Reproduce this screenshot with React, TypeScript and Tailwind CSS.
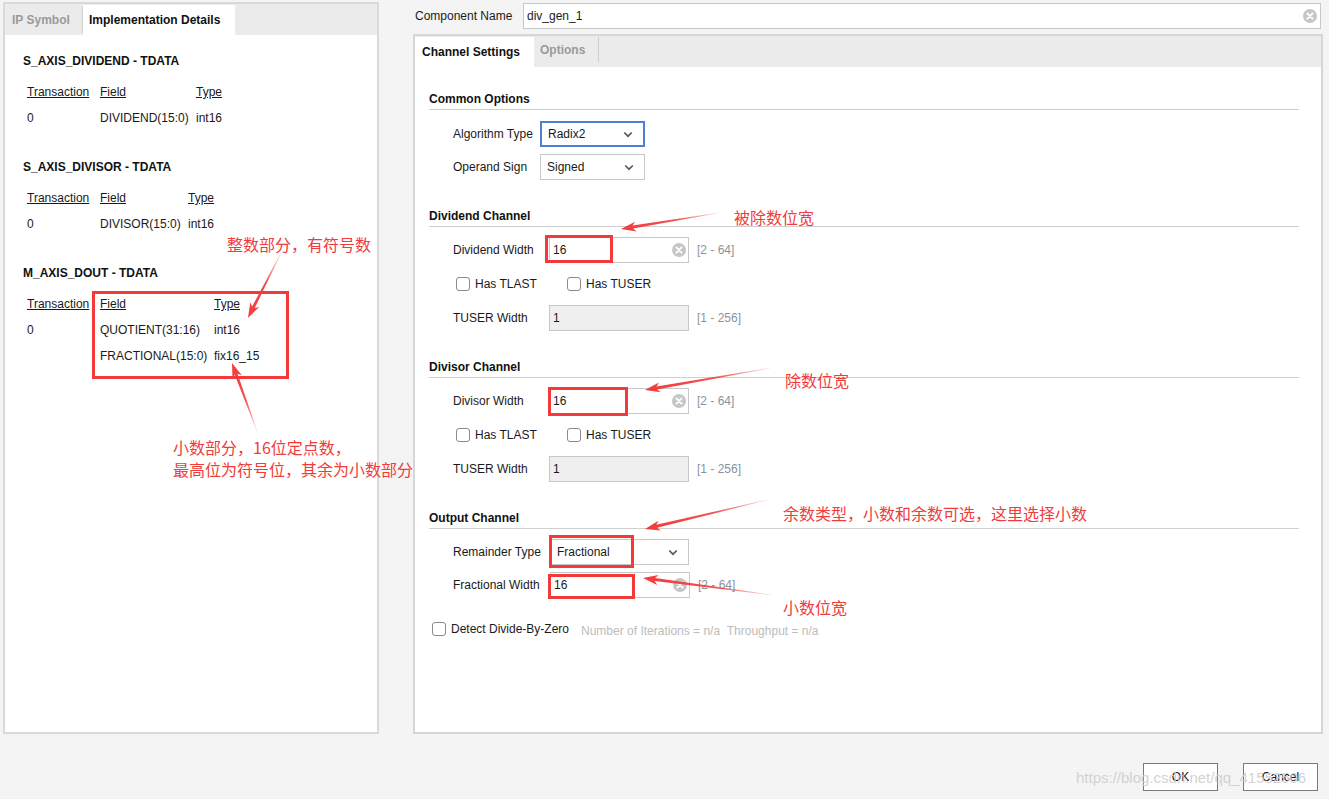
import React from "react";

const RED = "#f23b3b";

type ArrowProps = { id: string; x1: number; y1: number; x2: number; y2: number };

function Arrow({ id, x1, y1, x2, y2 }: ArrowProps) {
  const dx = x2 - x1;
  const dy = y2 - y1;
  const L = Math.hypot(dx, dy);
  const ux = dx / L;
  const uy = dy / L;
  const nx = -uy;
  const ny = ux;
  const hl = 15;
  const hw = 5;
  const sw0 = 0.3;
  const sw1 = 1.5;
  const bx = x2 - ux * hl;
  const by = y2 - uy * hl;
  const nbx = bx + ux * 3;
  const nby = by + uy * 3;
  const pts: [number, number][] = [
    [x1 + nx * sw0, y1 + ny * sw0],
    [nbx + nx * sw1, nby + ny * sw1],
    [bx + nx * hw, by + ny * hw],
    [x2, y2],
    [bx - nx * hw, by - ny * hw],
    [nbx - nx * sw1, nby - ny * sw1],
    [x1 - nx * sw0, y1 - ny * sw0],
  ];
  return (
    <g>
      <defs>
        <linearGradient id={id} gradientUnits="userSpaceOnUse" x1={x1} y1={y1} x2={x2} y2={y2}>
          <stop offset="0" stopColor={RED} stopOpacity="0.15" />
          <stop offset="0.45" stopColor={RED} stopOpacity="0.9" />
          <stop offset="1" stopColor={RED} stopOpacity="1" />
        </linearGradient>
      </defs>
      <polygon points={pts.map((p) => p.join(",")).join(" ")} fill={`url(#${id})`} />
    </g>
  );
}

function ClearIcon() {
  return (
    <svg width="14" height="14" viewBox="0 0 14 14">
      <circle cx="7" cy="7" r="7" fill="#c6c6c6" />
      <path d="M4.4 4.4 L9.6 9.6 M9.6 4.4 L4.4 9.6" stroke="#ffffff" strokeWidth="1.9" strokeLinecap="round" />
    </svg>
  );
}

function Chevron() {
  return (
    <svg width="10" height="7" viewBox="0 0 10 7">
      <path d="M1.2 1.5 L5 5.2 L8.8 1.5" stroke="#5a5a5a" strokeWidth="1.7" fill="none" />
    </svg>
  );
}

function Checkbox() {
  return <div className="w-[14px] h-[14px] rounded-[3px] border border-[#8a8a8a] bg-white shrink-0" />;
}

function SectionHeading({ title, mt }: { title: string; mt: string }) {
  return (
    <div className={`${mt} pb-[2px] border-b border-[#cfcfcf] font-bold leading-[16px] text-[#111]`}>{title}</div>
  );
}

function TextInput({ value, disabled, w }: { value: string; disabled?: boolean; w: string }) {
  return (
    <div
      className={`${w} h-[26px] border border-[#c8c8c8] flex items-center pl-[3px] pr-[2px] ${
        disabled ? "bg-[#efefef]" : "bg-white"
      }`}
    >
      <span className="flex-1">{value}</span>
      {!disabled && <ClearIcon />}
    </div>
  );
}

function Range({ text }: { text: string }) {
  return <span className="ml-[8px] text-[#8c939c]">{text}</span>;
}

function Row({ children, mt }: { children: React.ReactNode; mt: string }) {
  return <div className={`${mt} h-[26px] flex items-center`}>{children}</div>;
}

function Label({ text, w }: { text: string; w: string }) {
  return <div className={`${w} pl-[24px] shrink-0 whitespace-nowrap`}>{text}</div>;
}

function Select({ value, w, active }: { value: string; w: string; active?: boolean }) {
  return (
    <div
      className={`${w} h-[26px] bg-white flex items-center justify-between pl-[6px] pr-[10px] ${
        active ? "border-2 border-[#4d7fd6]" : "border border-[#c8c8c8]"
      }`}
    >
      <span>{value}</span>
      <Chevron />
    </div>
  );
}

function ChannelRows({ label }: { label: string }) {
  return (
    <>
      <Row mt="mt-[10px]">
        <Label text={label} w="w-[120px]" />
        <TextInput value="16" w="w-[140px]" />
        <Range text="[2 - 64]" />
      </Row>
      <Row mt="mt-[8px]">
        <div className="pl-[27px] flex items-center w-[138px] shrink-0">
          <Checkbox />
          <span className="ml-[5px]">Has TLAST</span>
        </div>
        <Checkbox />
        <span className="ml-[5px]">Has TUSER</span>
      </Row>
      <Row mt="mt-[8px]">
        <Label text="TUSER Width" w="w-[120px]" />
        <TextInput value="1" w="w-[140px]" disabled />
        <Range text="[1 - 256]" />
      </Row>
    </>
  );
}

function TableRow({ cells, w2, header }: { cells: string[]; w2: string; header?: boolean }) {
  return (
    <div className="h-[26px] flex items-center">
      <div className={`w-[73px] ${header ? "underline" : ""}`}>{cells[0]}</div>
      <div className={`${w2} ${header ? "underline" : ""}`}>{cells[1]}</div>
      <div className={header ? "underline" : ""}>{cells[2]}</div>
    </div>
  );
}

function DataBlock({
  title,
  mt,
  w2,
  rows,
}: {
  title: string;
  mt: string;
  w2: string;
  rows: string[][];
}) {
  return (
    <div className={mt}>
      <div className="font-bold leading-[16px] text-[#111]">{title}</div>
      <div className="pl-[4px] mt-[10px]">
        <TableRow cells={["Transaction", "Field", "Type"]} w2={w2} header />
        {rows.map((r, i) => (
          <TableRow key={i} cells={r} w2={w2} />
        ))}
      </div>
    </div>
  );
}

export default function App() {
  return (
    <div className="relative w-[1329px] h-[799px] overflow-hidden bg-[#f4f4f4] text-[12px] text-[#1a1a1a] font-['Liberation_Sans','Noto_Sans_CJK_SC',sans-serif]">
      <div className="flex h-[735px]">
        {/* Left panel */}
        <div className="ml-[3px] mt-[2px] w-[376px] h-[732px] border-2 border-[#d9d9d9] bg-white flex flex-col">
          <div className="h-[31px] bg-[#ebebeb] flex shrink-0">
            <div className="w-[78px] border-r border-[#cfcfcf] my-[2px] pl-[7px] flex items-center font-bold text-[#9a9a9a]">
              IP Symbol
            </div>
            <div className="mt-[1px] w-[152px] bg-white pl-[6px] flex items-center font-bold text-[#111]">
              Implementation Details
            </div>
          </div>
          <div className="pl-[18px]">
            <DataBlock
              title="S_AXIS_DIVIDEND - TDATA"
              mt="mt-[18px]"
              w2="w-[96px]"
              rows={[["0", "DIVIDEND(15:0)", "int16"]]}
            />
            <DataBlock
              title="S_AXIS_DIVISOR - TDATA"
              mt="mt-[28px]"
              w2="w-[88px]"
              rows={[["0", "DIVISOR(15:0)", "int16"]]}
            />
            <DataBlock
              title="M_AXIS_DOUT - TDATA"
              mt="mt-[28px]"
              w2="w-[114px]"
              rows={[
                ["0", "QUOTIENT(31:16)", "int16"],
                ["", "FRACTIONAL(15:0)", "fix16_15"],
              ]}
            />
          </div>
        </div>

        {/* Right column */}
        <div className="ml-[34px] w-[910px] flex flex-col">
          <div className="mt-[3px] h-[26px] flex items-center">
            <div className="w-[110px] pl-[2px]">Component Name</div>
            <div className="w-[798px] h-[26px] border border-[#c8c8c8] bg-white flex items-center pl-[3px] pr-[3px]">
              <span className="flex-1">div_gen_1</span>
              <ClearIcon />
            </div>
          </div>
          <div className="mt-[5px] w-[910px] h-[700px] border-2 border-[#d6d6d6] bg-white flex flex-col">
            <div className="h-[31px] bg-[#ebebeb] flex shrink-0">
              <div className="mt-[1px] w-[119px] bg-white pl-[7px] flex items-center font-bold text-[#111]">
                Channel Settings
              </div>
              <div className="w-[65px] mt-[1px] mb-[5px] border-r border-[#cfcfcf] pl-[6px] flex items-center font-bold text-[#9a9a9a]">
                Options
              </div>
            </div>
            <div className="pl-[14px] pr-[22px] flex flex-col">
              <SectionHeading title="Common Options" mt="mt-[24px]" />
              <Row mt="mt-[11px]">
                <Label text="Algorithm Type" w="w-[111px]" />
                <Select value="Radix2" w="w-[105px]" active />
              </Row>
              <Row mt="mt-[7px]">
                <Label text="Operand Sign" w="w-[111px]" />
                <Select value="Signed" w="w-[105px]" />
              </Row>

              <SectionHeading title="Dividend Channel" mt="mt-[28px]" />
              <ChannelRows label="Dividend Width" />

              <SectionHeading title="Divisor Channel" mt="mt-[28px]" />
              <ChannelRows label="Divisor Width" />

              <SectionHeading title="Output Channel" mt="mt-[28px]" />
              <Row mt="mt-[10px]">
                <Label text="Remainder Type" w="w-[121px]" />
                <Select value="Fractional" w="w-[139px]" />
              </Row>
              <Row mt="mt-[7px]">
                <Label text="Fractional Width" w="w-[121px]" />
                <TextInput value="16" w="w-[140px]" />
                <Range text="[2 - 64]" />
              </Row>
              <Row mt="mt-[18px]">
                <div className="pl-[3px] flex items-center">
                  <Checkbox />
                  <span className="ml-[5px]">Detect Divide-By-Zero</span>
                </div>
                <span className="ml-[12px] mt-[3px] text-[#bcbcbc]">
                  Number of Iterations = n/a&nbsp;&nbsp;Throughput = n/a
                </span>
              </Row>
            </div>
          </div>
        </div>
      </div>

      {/* Buttons */}
      <div className="mt-[28px] flex justify-end gap-[25px] pr-[11px]">
        <button className="w-[75px] h-[28px] border border-[#7a7a7a] bg-white text-[12px] text-[#111]">OK</button>
        <button className="w-[75px] h-[28px] border border-[#7a7a7a] bg-white text-[12px] text-[#111]">Cancel</button>
      </div>

      {/* Watermark */}
      <div className="absolute left-[1076px] top-[768px] text-[15px] leading-[20px] text-[#cfcfcf] opacity-90 pointer-events-none">
        https://blog.csdn.net/qq_41552506
      </div>

      {/* Annotation red boxes */}
      <div className="absolute left-[92px] top-[291px] w-[197px] h-[88px] border-[3px] border-[#f33a3a]" />
      <div className="absolute left-[545px] top-[235px] w-[68px] h-[28px] border-[3px] border-[#f33a3a]" />
      <div className="absolute left-[548px] top-[387px] w-[80px] h-[29px] border-[3px] border-[#f33a3a]" />
      <div className="absolute left-[549px] top-[535px] w-[85px] h-[33px] border-[3px] border-[#f33a3a]" />
      <div className="absolute left-[548px] top-[574px] w-[87px] h-[25px] border-[3px] border-[#f33a3a]" />

      {/* Annotation arrows */}
      <svg className="absolute left-0 top-0 pointer-events-none" width="1329" height="799">
        <Arrow id="a1" x1={281} y1={253} x2={248} y2={318} />
        <Arrow id="a2" x1={257} y1={431} x2={232} y2={363} />
        <Arrow id="a3" x1={718} y1={213} x2={621} y2={229} />
        <Arrow id="a4" x1={770} y1={368} x2={645} y2={390} />
        <Arrow id="a5" x1={767} y1={500} x2={645} y2={529} />
        <Arrow id="a6" x1={772} y1={595} x2={643} y2={578} />
      </svg>

      {/* Annotation texts */}
      <div className="absolute left-[227px] top-[233px] text-[16px] leading-[22px] text-[#f23b3b] font-['Noto_Sans_CJK_SC',sans-serif] whitespace-nowrap">
        整数部分，有符号数
      </div>
      <div className="absolute left-[173px] top-[436px] text-[16px] leading-[22px] text-[#f23b3b] font-['Noto_Sans_CJK_SC',sans-serif] whitespace-nowrap">
        <div>小数部分，16位定点数，</div>
        <div>最高位为符号位，其余为小数部分</div>
      </div>
      <div className="absolute left-[734px] top-[206px] text-[16px] leading-[22px] text-[#f23b3b] font-['Noto_Sans_CJK_SC',sans-serif] whitespace-nowrap">
        被除数位宽
      </div>
      <div className="absolute left-[785px] top-[369px] text-[16px] leading-[22px] text-[#f23b3b] font-['Noto_Sans_CJK_SC',sans-serif] whitespace-nowrap">
        除数位宽
      </div>
      <div className="absolute left-[783px] top-[502px] text-[16px] leading-[22px] text-[#f23b3b] font-['Noto_Sans_CJK_SC',sans-serif] whitespace-nowrap">
        余数类型，小数和余数可选，这里选择小数
      </div>
      <div className="absolute left-[783px] top-[596px] text-[16px] leading-[22px] text-[#f23b3b] font-['Noto_Sans_CJK_SC',sans-serif] whitespace-nowrap">
        小数位宽
      </div>
    </div>
  );
}
